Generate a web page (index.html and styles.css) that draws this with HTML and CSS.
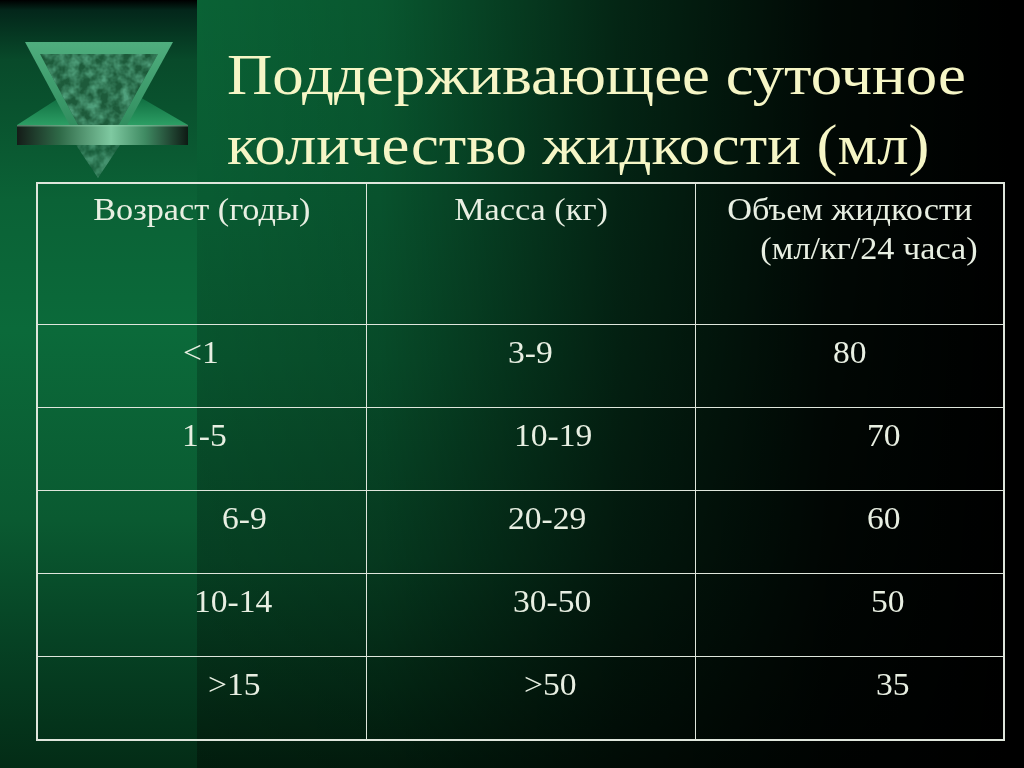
FILE: index.html
```html
<!DOCTYPE html>
<html lang="ru">
<head>
<meta charset="utf-8">
<title>Поддерживающее суточное количество жидкости</title>
<link rel="stylesheet" href="styles.css">
</head>
<body>
<div class="slide">
  <header class="head">
    <div class="logo">
      <svg width="171" height="140" viewBox="17 40 171 140" xmlns="http://www.w3.org/2000/svg">
        <defs>
          <linearGradient id="wing" x1="0" y1="0" x2="0" y2="1">
            <stop offset="0" stop-color="#0e6a3e"/>
            <stop offset="1" stop-color="#2c9e64"/>
          </linearGradient>
          <linearGradient id="bevel" x1="0" y1="0" x2="0" y2="1">
            <stop offset="0" stop-color="#4fae7e"/>
            <stop offset="1" stop-color="#1f7a4c"/>
          </linearGradient>
          <linearGradient id="bar" x1="0" y1="0" x2="1" y2="0">
            <stop offset="0" stop-color="#141c18"/>
            <stop offset="0.25" stop-color="#2f6a48"/>
            <stop offset="0.55" stop-color="#7fc9a1"/>
            <stop offset="0.75" stop-color="#3f8a62"/>
            <stop offset="1" stop-color="#0e1a14"/>
          </linearGradient>
          <filter id="marble" x="0" y="0" width="100%" height="100%">
            <feTurbulence type="fractalNoise" baseFrequency="0.09" numOctaves="3" seed="4" result="n"/>
            <feColorMatrix in="n" type="matrix" values="0 0 0 0 0.08  0 0 0 0 0.35  0 0 0 0 0.2  0 0 0 -2.2 1.5" result="c"/>
            <feComposite in="c" in2="SourceGraphic" operator="in"/>
          </filter>
        </defs>
        <polygon points="17,125 62,96 138,96 188,125" fill="url(#wing)"/>
        <polygon points="25,42 173,42 98,178" fill="url(#bevel)"/>
        <polygon points="40,54 158,54 98,162" fill="#1d5a3a"/>
        <polygon points="40,54 158,54 98,162" fill="#4a9a70" filter="url(#marble)"/>
        <polygon points="76,145 120,145 98,178" fill="#185c3a"/>
        <polygon points="76,145 120,145 98,178" fill="#4a9a70" filter="url(#marble)" opacity="0.8"/>
        <rect x="17" y="125" width="171" height="20" fill="url(#bar)"/>
        <rect x="17" y="125" width="171" height="1.5" fill="#9ad8b4" opacity="0.5"/>
      </svg>
    </div>
    <h1 class="title"><span class="tl">Поддерживающее суточное</span><span class="tl">количество жидкости (мл)</span></h1>
  </header>
  <table class="grid">
    <colgroup><col class="c1"><col class="c2"><col class="c3"></colgroup>
    <tr class="hrow">
      <td class="center"><span class="l1">Возраст (годы)</span></td>
      <td class="center"><span class="l1">Масса (кг)</span></td>
      <td class="center"><span class="l1">Объем жидкости</span><span class="l2">(мл/кг/24 часа)</span></td>
    </tr>
    <tr>
      <td><span class="v o146">&lt;1</span></td>
      <td><span class="v o142">3-9</span></td>
      <td><span class="v o138">80</span></td>
    </tr>
    <tr>
      <td><span class="v o145">1-5</span></td>
      <td><span class="v o148">10-19</span></td>
      <td><span class="v o172">70</span></td>
    </tr>
    <tr>
      <td><span class="v o185">6-9</span></td>
      <td><span class="v o142">20-29</span></td>
      <td><span class="v o172">60</span></td>
    </tr>
    <tr>
      <td><span class="v o157">10-14</span></td>
      <td><span class="v o147">30-50</span></td>
      <td><span class="v o176">50</span></td>
    </tr>
    <tr class="last">
      <td><span class="v o171">&gt;15</span></td>
      <td><span class="v o158">&gt;50</span></td>
      <td><span class="v o181">35</span></td>
    </tr>
  </table>
</div>
</body>
</html>
```
FILE: styles.css
```css
html, body {
  margin: 0;
  padding: 0;
  background: #000;
}
.slide {
  width: 1024px;
  height: 768px;
  overflow: hidden;
  font-family: "Liberation Serif", "Times New Roman", serif;
  background:
    linear-gradient(to bottom, #000 0px, #03261a 10px, #084a2a 60px, #0b6236 200px, #0b6a3a 330px, #0a5a31 520px, #064224 640px, #032c16 768px) 0 0 / 197px 768px no-repeat,
    linear-gradient(to right, rgba(0,0,0,0) 0px, rgba(0,0,0,0.2) 380px, rgba(0,0,0,0.66) 620px, rgba(0,0,0,0.92) 830px, #000 1010px),
    linear-gradient(to bottom, #0b6d3b 0px, #0a6638 200px, #095c32 360px, #074626 560px, #02200f 768px);
}
.head {
  display: flex;
  height: 182px;
}
.logo {
  width: 210px;
  padding: 40px 0 0 17px;
  box-sizing: border-box;
  flex: none;
}
.logo svg { display: block; }
.title {
  margin: 0;
  padding: 40px 0 0 17px;
  font-weight: normal;
  font-size: 58px;
  line-height: 70px;
  color: #f6f6c6;
  white-space: nowrap;
}
.tl {
  display: block;
  transform: scaleX(1.083);
  transform-origin: left top;
}
.grid {
  margin-left: 36px;
  width: 967px;
  border-collapse: collapse;
  table-layout: fixed;
  color: #e8efe2;
  border: 2px solid #dfe6dc;
}
.c1 { width: 329px; }
.c2 { width: 329px; }
.c3 { width: 309px; }
.grid td {
  border: 1px solid #dfe6dc;
  padding: 0;
  vertical-align: top;
  height: 83px;
  box-sizing: border-box;
  font-size: 32px;
  line-height: 36px;
}
.grid .hrow td {
  height: 141px;
  padding-top: 6px;
  line-height: 39px;
}
.grid .last td { height: 84px; }
.center { text-align: center; }
.l1, .l2 {
  display: block;
  transform: scaleX(1.07);
  transform-origin: center top;
}
.l2 { padding-left: 36px; }
.v {
  display: inline-block;
  margin-top: 9px;
  transform: scaleX(1.05);
  transform-origin: left top;
}
.o138 { margin-left: 137px; }
.o142 { margin-left: 141px; }
.o145 { margin-left: 144px; }
.o146 { margin-left: 145px; }
.o147 { margin-left: 146px; }
.o148 { margin-left: 147px; }
.o157 { margin-left: 156px; }
.o158 { margin-left: 157px; }
.o171 { margin-left: 170px; }
.o172 { margin-left: 171px; }
.o176 { margin-left: 175px; }
.o181 { margin-left: 180px; }
.o185 { margin-left: 184px; }
```
